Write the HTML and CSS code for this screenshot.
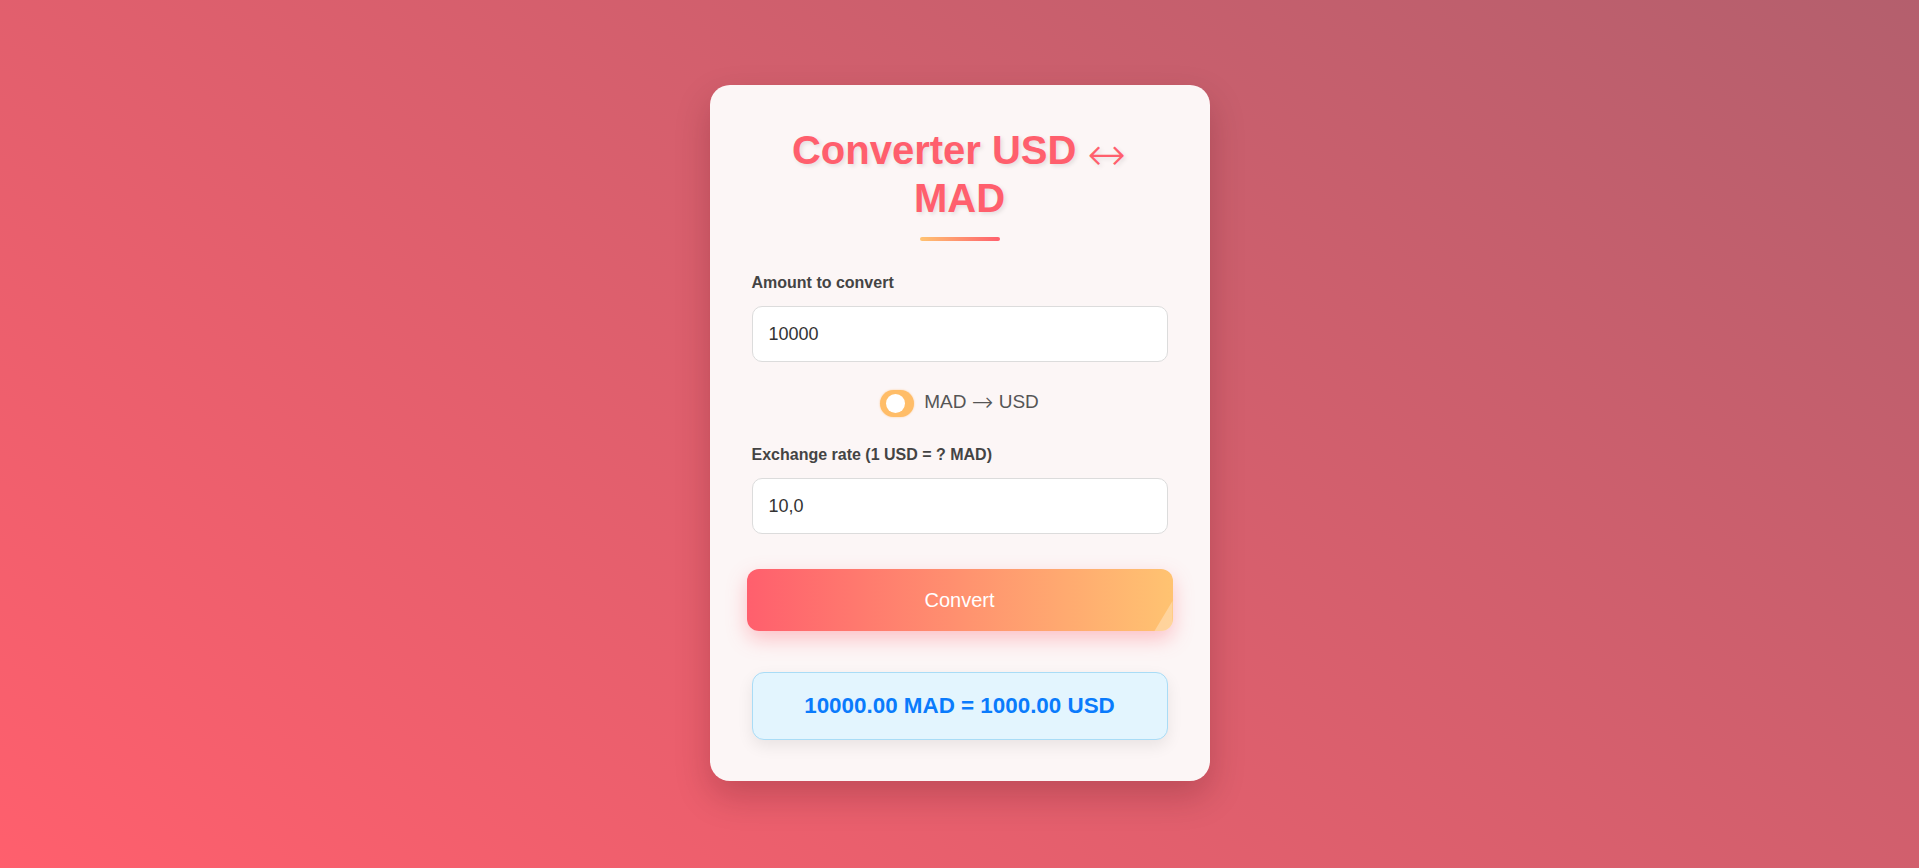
FILE: index.html
```html
<!DOCTYPE html>
<html lang="en">
<head>
<meta charset="UTF-8">
<title>Converter USD ↔ MAD</title>
<link rel="stylesheet" href="styles.css">
</head>
<body>
  <main class="card">
    <h1 class="title">Converter USD <span class="arrow-lr">↔</span> MAD</h1>
    <div class="title-bar"></div>

    <label class="field-label" for="amount">Amount to convert</label>
    <input class="field-input" id="amount" type="text" value="10000">

    <div class="toggle-row">
      <span class="toggle"><span class="knob"></span></span>
      <span class="toggle-text">MAD <span class="arrow-r">→</span> USD</span>
    </div>

    <label class="field-label" for="rate">Exchange rate (1 USD = ? MAD)</label>
    <input class="field-input" id="rate" type="text" value="10,0">

    <button class="convert-btn" type="button">Convert</button>

    <div class="result">10000.00 MAD = 1000.00 USD</div>
  </main>
</body>
</html>
```

FILE: styles.css
```css
* {
  box-sizing: border-box;
}

html, body {
  margin: 0;
  padding: 0;
  height: 100%;
}

body {
  font-family: "Liberation Sans", Arial, sans-serif;
  background: linear-gradient(35deg, #ff5f6d 0%, #b45f6d 100%);
  display: flex;
  justify-content: center;
  align-items: flex-start;
  padding-top: 85px;
}

.card {
  width: 500px;
  background: #fcf6f6;
  border-radius: 20px;
  padding: 41px 42px 41px;
  box-shadow: 0 15px 35px rgba(60, 10, 20, 0.22);
  display: flex;
  flex-direction: column;
}

.title {
  margin: 0;
  font-size: 40px;
  line-height: 48px;
  font-weight: bold;
  color: #ff5f6d;
  text-align: center;
  text-shadow: 2px 2px 4px rgba(0, 0, 0, 0.1);
}

.arrow-lr {
  font-family: "DejaVu Sans", sans-serif;
  font-weight: 200;
  font-size: 46px;
  line-height: 0;
  letter-spacing: 1px;
  position: relative;
  top: 6px;
}

.title-bar {
  width: 80px;
  height: 4px;
  border-radius: 2px;
  margin: 15px auto 0;
  background: linear-gradient(90deg, #ffc371, #ff5f6d);
}

.field-label {
  display: block;
  font-size: 16px;
  font-weight: bold;
  color: #444;
  line-height: normal;
  margin-top: 33px;
  margin-bottom: 14px;
}

.field-input {
  display: block;
  width: 100%;
  height: 56px;
  padding: 0 16px;
  border: 1px solid #dcdcdc;
  border-radius: 10px;
  background: #fff;
  font-family: "Liberation Sans", Arial, sans-serif;
  font-size: 18px;
  color: #333;
  outline: none;
}

.toggle-row {
  display: flex;
  justify-content: center;
  align-items: center;
  gap: 10px;
  height: 27px;
  margin-top: 28px;
}

.toggle-row + .field-label {
  margin-top: 29px;
}

.toggle {
  width: 34px;
  height: 27px;
  border-radius: 14px;
  background: #ffbd68;
  display: flex;
  align-items: center;
  padding-left: 6px;
  box-shadow: 0 0 2px rgba(255, 170, 80, 0.6);
}

.knob {
  width: 19px;
  height: 19px;
  border-radius: 50%;
  background: #fff;
}

.toggle-text {
  font-size: 19px;
  line-height: 22px;
  color: #555;
  position: relative;
  top: -2px;
  white-space: nowrap;
}

.arrow-r {
  font-family: "DejaVu Sans", sans-serif;
  font-weight: 200;
  font-size: 26px;
  line-height: 0;
  position: relative;
  top: 3px;
}

.convert-btn {
  position: relative;
  overflow: hidden;
  margin: 35px -5px 0;
  height: 62px;
  border: none;
  border-radius: 12px;
  background: linear-gradient(90deg, #ff5f6d, #ffc371);
  color: #fff;
  font-family: "Liberation Sans", Arial, sans-serif;
  font-size: 20px;
  cursor: pointer;
  box-shadow: 0 8px 20px rgba(255, 95, 109, 0.35);
}

.convert-btn::after {
  content: "";
  position: absolute;
  inset: 0;
  background: rgba(255, 255, 255, 0.3);
  clip-path: polygon(calc(100% - 18px) 100%, 100% calc(100% - 30px), 100% 100%);
}

.result {
  margin-top: 41px;
  height: 68px;
  display: flex;
  align-items: center;
  justify-content: center;
  background: #e3f5fe;
  border: 1px solid #a9dcf6;
  border-radius: 12px;
  font-size: 22.4px;
  font-weight: bold;
  color: #0a7bfc;
  box-shadow: 0 6px 16px rgba(0, 0, 0, 0.08);
}
```
